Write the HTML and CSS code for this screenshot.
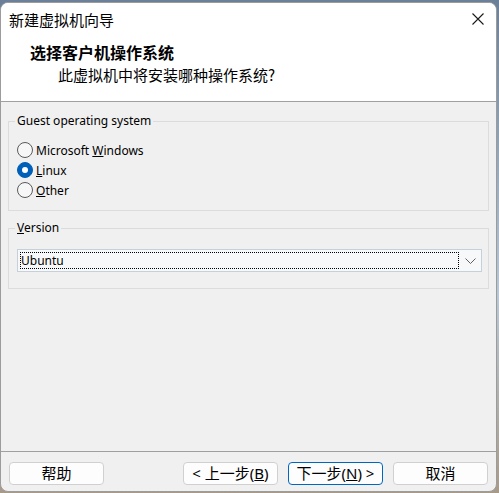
FILE: index.html
```html
<!DOCTYPE html>
<html lang="zh-CN">
<head>
<meta charset="utf-8">
<title>新建虚拟机向导</title>
<link rel="stylesheet" href="styles.css">
</head>
<body>
<div class="window">
  <div class="head">
    <div class="titlebar">
      <span class="title">新建虚拟机向导</span>
      <span class="close"><svg width="12" height="12" viewBox="0 0 12 12"><path d="M0.5 0.5 L11.5 11.5 M11.5 0.5 L0.5 11.5" stroke="#1a1a1a" stroke-width="1.1" fill="none"/></svg></span>
    </div>
    <div class="header">
      <div class="h-title">选择客户机操作系统</div>
      <div class="h-sub">此虚拟机中将安装哪种操作系统?</div>
    </div>
  </div>
  <div class="content">
    <fieldset class="group g-os">
      <legend>Guest operating system</legend>
      <div class="radio"><span class="dot"></span><span>Microsoft <u>W</u>indows</span></div>
      <div class="radio"><span class="dot on"></span><span><u>L</u>inux</span></div>
      <div class="radio"><span class="dot"></span><span><u>O</u>ther</span></div>
    </fieldset>
    <fieldset class="group g-ver">
      <legend><u>V</u>ersion</legend>
      <div class="combo">
        <div class="combo-value"><span>Ubuntu</span></div>
        <span class="chev"><svg width="11" height="6" viewBox="0 0 11 6"><path d="M0.5 0.5 L5.5 5.5 L10.5 0.5" stroke="#606060" stroke-width="1" fill="none"/></svg></span>
      </div>
    </fieldset>
  </div>
  <div class="footer">
    <button class="btn">帮助</button>
    <div class="btn-group">
      <button class="btn">&lt; 上一步(<u>B</u>)</button>
      <button class="btn default">下一步(<u>N</u>) &gt;</button>
      <button class="btn">取消</button>
    </div>
  </div>
</div>
</body>
</html>
```
FILE: styles.css
```css
html, body {
  margin: 0;
  padding: 0;
}
body {
  width: 499px;
  height: 493px;
  overflow: hidden;
  background: linear-gradient(180deg, #6b8098 0%, #b9c8d6 60%, #a89a88 100%);
  font-family: "Noto Sans", "Noto Sans CJK SC", sans-serif;
  color: #000;
}
.window {
  box-sizing: border-box;
  width: 497px;
  height: 490px;
  margin-top: 2px;
  border: 1px solid #9c9c9c;
  border-radius: 8px;
  overflow: hidden;
  display: flex;
  flex-direction: column;
  background: #f0f0f0;
}
.head {
  background: #fff;
  border-bottom: 1px solid #a0a0a0;
}
.titlebar {
  height: 34px;
  display: flex;
  align-items: flex-start;
  justify-content: space-between;
  padding-left: 8px;
}
.title {
  font-family: "Noto Sans CJK SC", sans-serif;
  font-size: 15px;
  line-height: 34px;
}
.close {
  width: 12px;
  height: 12px;
  margin-top: 10px;
  margin-right: 12px;
  display: flex;
}
.header {
  height: 64px;
  box-sizing: border-box;
  padding: 6px 0 16px 29px;
  font-family: "Noto Sans CJK SC", sans-serif;
}
.h-title {
  font-size: 16px;
  font-weight: bold;
  line-height: 19px;
}
.h-sub {
  font-size: 15px;
  line-height: 20px;
  margin-top: 3px;
  padding-left: 28px;
}
.content {
  flex: 1;
  padding: 0 7px;
}
.group {
  margin: 0;
  border: 1px solid #dcdcdc;
  padding: 0 6px;
  font-size: 12px;
}
.group legend {
  padding: 0 2px;
  line-height: 18px;
}
.g-os {
  margin-top: 10px;
  padding-top: 10px;
  padding-bottom: 10px;
}
.g-ver {
  margin-top: 8px;
  padding-top: 12px;
  padding-bottom: 16px;
}
.radio {
  display: flex;
  align-items: center;
  gap: 3px;
  height: 20px;
  margin-left: 2px;
}
.dot {
  box-sizing: border-box;
  width: 16px;
  height: 16px;
  border-radius: 50%;
  border: 1px solid #5a5a5a;
  background: #f7f7f7;
  display: flex;
  align-items: center;
  justify-content: center;
}
.dot.on {
  background: #005fb8;
  border-color: #005fb8;
}
.dot.on::after {
  content: "";
  width: 6px;
  height: 6px;
  border-radius: 50%;
  background: #fff;
}
.combo {
  box-sizing: border-box;
  width: 465px;
  height: 23px;
  margin-left: 2px;
  border: 1px solid #c5d0db;
  background: #f7f8fa;
  display: flex;
}
.combo-value {
  flex: 1;
  margin: 2px 0 2px 2px;
  border: 1px dotted #000;
  display: flex;
  align-items: center;
  line-height: 15px;
}
.chev {
  width: 22px;
  display: flex;
  align-items: center;
  justify-content: center;
}
.footer {
  box-sizing: border-box;
  height: 40px;
  border-top: 1px solid #a0a0a0;
  padding: 10px 8px 0 8px;
  display: flex;
  align-items: flex-start;
  justify-content: space-between;
}
.btn-group {
  display: flex;
  gap: 10px;
}
.btn {
  box-sizing: border-box;
  width: 95px;
  height: 23px;
  padding: 0;
  border: 1px solid #d0d0d0;
  border-radius: 4px;
  background: #fdfdfd;
  font-family: "Noto Sans", "Noto Sans CJK SC", sans-serif;
  font-size: 15px;
  line-height: 21px;
  color: #000;
}
.btn.default {
  border-color: #0067c0;
}
```
